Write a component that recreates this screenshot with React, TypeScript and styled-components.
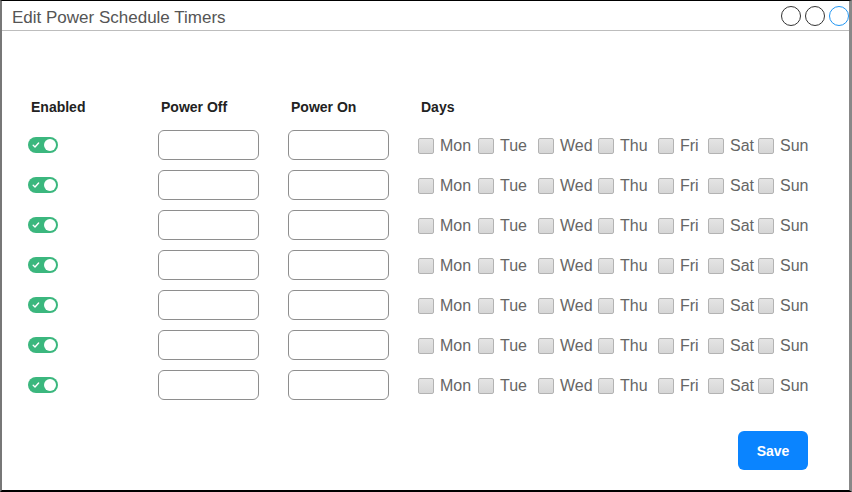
import React, { useState } from 'react';
import styled, { createGlobalStyle } from 'styled-components';

const GlobalStyle = createGlobalStyle`
  html, body {
    margin: 0;
    padding: 0;
    background: #fff;
  }
  body {
    font-family: 'Liberation Sans', Arial, Helvetica, sans-serif;
  }
`;

const DAYS: { label: string; width: number }[] = [
  { label: 'Mon', width: 60 },
  { label: 'Tue', width: 60 },
  { label: 'Wed', width: 60 },
  { label: 'Thu', width: 60 },
  { label: 'Fri', width: 50 },
  { label: 'Sat', width: 50 },
  { label: 'Sun', width: 60 },
];

const ROW_COUNT = 7;

type Timer = {
  enabled: boolean;
  off: string;
  on: string;
  days: boolean[];
};

const initialTimers = (): Timer[] =>
  Array.from({ length: ROW_COUNT }, () => ({
    enabled: true,
    off: '',
    on: '',
    days: DAYS.map(() => false),
  }));

const Toggle: React.FC<{ on: boolean; onChange: () => void }> = ({ on, onChange }) => (
  <S.Toggle $on={on} onClick={onChange} role="switch" aria-checked={on}>
    <S.ToggleCheck viewBox="0 0 8 8">
      <path d="M1.2 4.3 L3 6 L6.6 2" />
    </S.ToggleCheck>
    <S.Knob $on={on} />
  </S.Toggle>
);

const App: React.FC = () => {
  const [timers, setTimers] = useState<Timer[]>(initialTimers);

  const update = (index: number, patch: Partial<Timer>) =>
    setTimers((prev) => prev.map((t, i) => (i === index ? { ...t, ...patch } : t)));

  return (
    <>
      <GlobalStyle />
      <S.Window>
        <S.TitleBar>
          <S.Title>Edit Power Schedule Timers</S.Title>
          <S.Controls>
            <S.Circle />
            <S.Circle />
            <S.Circle $active />
          </S.Controls>
        </S.TitleBar>
        <S.Body>
          <S.Grid>
            <S.Header>Enabled</S.Header>
            <S.Header>Power Off</S.Header>
            <S.Header>Power On</S.Header>
            <S.Header>Days</S.Header>
            {timers.map((timer, i) => (
              <React.Fragment key={i}>
                <S.Cell>
                  <Toggle on={timer.enabled} onChange={() => update(i, { enabled: !timer.enabled })} />
                </S.Cell>
                <S.Cell>
                  <S.TimeInput value={timer.off} onChange={(e) => update(i, { off: e.target.value })} />
                </S.Cell>
                <S.Cell>
                  <S.TimeInput value={timer.on} onChange={(e) => update(i, { on: e.target.value })} />
                </S.Cell>
                <S.Cell>
                  <S.DayList>
                    {DAYS.map((day, d) => (
                      <S.DayLabel key={day.label} $width={day.width}>
                        <S.Check
                          type="checkbox"
                          checked={timer.days[d]}
                          onChange={() =>
                            update(i, { days: timer.days.map((v, k) => (k === d ? !v : v)) })
                          }
                        />
                        {day.label}
                      </S.DayLabel>
                    ))}
                  </S.DayList>
                </S.Cell>
              </React.Fragment>
            ))}
          </S.Grid>
          <S.Footer>
            <S.SaveButton>Save</S.SaveButton>
          </S.Footer>
        </S.Body>
      </S.Window>
    </>
  );
};

const S = {
  Window: styled.div`
    width: 852px;
    height: 492px;
    box-sizing: border-box;
    border-top: 1px solid #000;
    border-left: 2px solid #777;
    border-right: 3px solid #888;
    border-bottom: 2px solid #000;
    display: flex;
    flex-direction: column;
    background: #fff;
  `,
  TitleBar: styled.div`
    height: 29px;
    border-bottom: 1px solid #bdbdbd;
    display: flex;
    align-items: center;
    justify-content: space-between;
    padding: 0 0 0 10px;
  `,
  Title: styled.span`
    font-size: 17px;
    color: #555;
    margin-top: 4px;
  `,
  Controls: styled.div`
    display: flex;
    gap: 4px;
    margin-top: 1px;
  `,
  Circle: styled.span<{ $active?: boolean }>`
    width: 20px;
    height: 20px;
    box-sizing: border-box;
    border-radius: 50%;
    border: 1.5px solid ${(p) => (p.$active ? '#2196f3' : '#333')};
  `,
  Body: styled.div`
    flex: 1;
    padding: 58px 41px 0 26px;
    display: flex;
    flex-direction: column;
  `,
  Grid: styled.div`
    display: grid;
    grid-template-columns: 130px 130px 130px auto;
    grid-template-rows: 36px;
    grid-auto-rows: 40px;
    align-items: center;
  `,
  Header: styled.div`
    font-size: 14px;
    font-weight: bold;
    color: #222;
    padding-left: 3px;
  `,
  Cell: styled.div`
    display: flex;
    align-items: center;
  `,
  Toggle: styled.button<{ $on: boolean }>`
    position: relative;
    width: 30px;
    height: 16px;
    padding: 0;
    border: none;
    border-radius: 8px;
    background: ${(p) => (p.$on ? '#3bb77e' : '#ccc')};
    cursor: pointer;
  `,
  ToggleCheck: styled.svg`
    position: absolute;
    left: 4px;
    top: 4px;
    width: 8px;
    height: 8px;
    fill: none;
    stroke: #fff;
    stroke-width: 1.4;
    stroke-linecap: round;
    stroke-linejoin: round;
  `,
  Knob: styled.span<{ $on: boolean }>`
    position: absolute;
    top: 2px;
    left: ${(p) => (p.$on ? '16px' : '2px')};
    width: 12px;
    height: 12px;
    border-radius: 50%;
    background: #fff;
  `,
  TimeInput: styled.input`
    width: 101px;
    height: 30px;
    box-sizing: border-box;
    border: 1px solid #8e8e8e;
    border-radius: 6px;
    padding: 0 6px;
    font-size: 14px;
    font-family: inherit;
    outline: none;
  `,
  DayList: styled.div`
    display: flex;
    align-items: center;
    margin-top: 2px;
  `,
  DayLabel: styled.label<{ $width: number }>`
    width: ${(p) => p.$width}px;
    display: flex;
    align-items: center;
    gap: 6px;
    font-size: 16px;
    color: #666;
    white-space: nowrap;
    cursor: pointer;
  `,
  Check: styled.input`
    appearance: none;
    margin: 0;
    width: 16px;
    height: 16px;
    border: 1px solid #b3b3b3;
    border-radius: 2px;
    background: linear-gradient(#e4e4e4, #d6d6d6);
    flex-shrink: 0;

    &:checked {
      background: #2196f3;
      border-color: #1a7fd0;
    }
  `,
  Footer: styled.div`
    display: flex;
    justify-content: flex-end;
    margin-top: 26px;
  `,
  SaveButton: styled.button`
    width: 70px;
    height: 39px;
    border: none;
    border-radius: 6px;
    background: #0a84ff;
    color: #fff;
    font-family: inherit;
    font-size: 14px;
    font-weight: bold;
    cursor: pointer;
  `,
};

export default App;
